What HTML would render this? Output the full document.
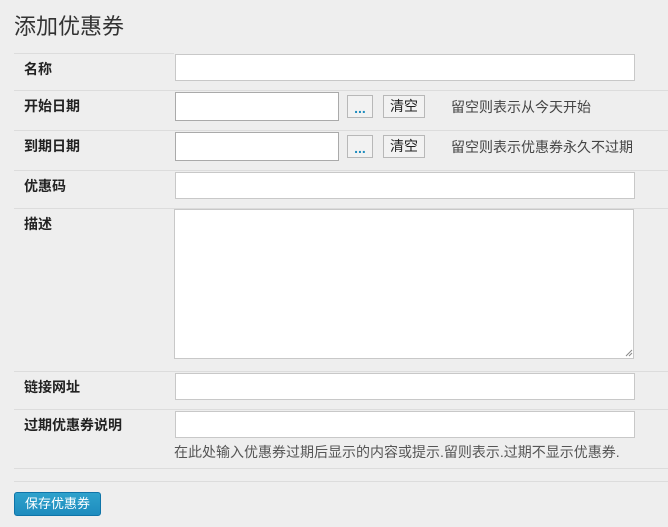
<!DOCTYPE html>
<html><head><meta charset="utf-8">
<style>
*{box-sizing:border-box;margin:0;padding:0}
body{width:668px;height:527px;background:#eeeeee;font-family:"Liberation Sans","Noto Sans CJK SC",sans-serif;position:relative;overflow:hidden;color:#333}
.abs{position:absolute}
h1{position:absolute;left:14px;top:12px;font-size:22px;font-weight:normal;color:#333;line-height:30px}
.line{position:absolute;left:14px;right:0;height:1px;background:#dcdcdc}
.lbl{position:absolute;left:24px;font-size:14px;font-weight:bold;color:#222;line-height:20px}
.inp{position:absolute;background:#fff;border:1px solid #c8c8c8}
.btn{position:absolute;background:#f2f2f2;border:1px solid #b8b8b8;font-size:14px;text-align:center;line-height:20px;color:#222}
.note{position:absolute;font-size:14px;color:#444;line-height:20px}
.save{position:absolute;left:14px;top:492px;width:87px;height:24px;background:linear-gradient(#2ea2cc,#1e8cbe);border:1px solid #0f74a8;border-radius:3px;color:#fff;font-size:13px;text-align:center;line-height:22px}
</style></head><body>
<h1>添加优惠券</h1>
<div class="line" style="top:53px;width:160px;right:auto"></div>
<div class="line" style="top:90px"></div>
<div class="line" style="top:130px"></div>
<div class="line" style="top:170px"></div>
<div class="line" style="top:208px"></div>
<div class="line" style="top:371px"></div>
<div class="line" style="top:409px"></div>
<div class="line" style="top:468px"></div>
<div class="line" style="top:481px"></div>

<div class="lbl" style="top:59px">名称</div>
<div class="inp" style="left:175px;top:54px;width:460px;height:27px"></div>

<div class="lbl" style="top:96px">开始日期</div>
<div class="inp" style="left:175px;top:92px;width:164px;height:29px;border-color:#aaa"></div>
<div class="btn" style="left:347px;top:95px;width:26px;height:23px;color:#1e8cbe;font-weight:bold;line-height:24px">...</div>
<div class="btn" style="left:383px;top:95px;width:42px;height:23px">清空</div>
<div class="note" style="left:451px;top:97px">留空则表示从今天开始</div>

<div class="lbl" style="top:136px">到期日期</div>
<div class="inp" style="left:175px;top:132px;width:164px;height:29px;border-color:#aaa"></div>
<div class="btn" style="left:347px;top:135px;width:26px;height:23px;color:#1e8cbe;font-weight:bold;line-height:24px">...</div>
<div class="btn" style="left:383px;top:135px;width:42px;height:23px">清空</div>
<div class="note" style="left:451px;top:137px">留空则表示优惠券永久不过期</div>

<div class="lbl" style="top:176px">优惠码</div>
<div class="inp" style="left:175px;top:172px;width:460px;height:27px"></div>

<div class="lbl" style="top:214px">描述</div>
<div class="inp" style="left:174px;top:209px;width:460px;height:150px"></div>
<svg class="abs" style="left:624px;top:348px" width="9" height="9"><path d="M2 8L8 2M5 8L8 5" stroke="#888" stroke-width="1"/></svg>

<div class="lbl" style="top:377px">链接网址</div>
<div class="inp" style="left:175px;top:373px;width:460px;height:27px"></div>

<div class="lbl" style="top:415px">过期优惠券说明</div>
<div class="inp" style="left:175px;top:411px;width:460px;height:27px"></div>
<div class="note" style="left:174px;top:442px;color:#555">在此处输入优惠券过期后显示的内容或提示.留则表示.过期不显示优惠券.</div>

<div class="save">保存优惠券</div>
</body></html>
